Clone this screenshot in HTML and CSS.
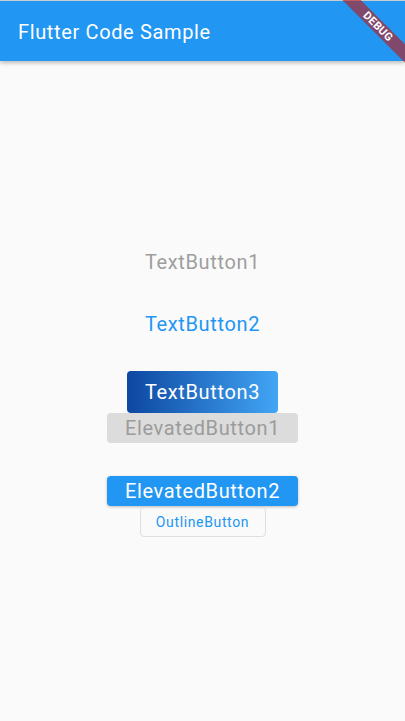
FILE: index.html
```html
<!DOCTYPE html>
<html>
<head>
<meta charset="utf-8">
<link rel="stylesheet" href="styles.css">
</head>
<body>
<div class="screen">
  <header class="appbar">
    <h1 class="title">Flutter Code Sample</h1>
  </header>
  <main class="content">
    <div class="text-btn disabled">TextButton1</div>
    <div class="text-btn primary">TextButton2</div>
    <div class="gradient-btn">TextButton3</div>
    <div class="elevated-btn disabled">ElevatedButton1</div>
    <div class="elevated-btn active">ElevatedButton2</div>
    <div class="outline-btn">OutlineButton</div>
  </main>
  <div class="debug-banner">DEBUG</div>
</div>
</body>
</html>
```
FILE: styles.css
```css
html, body {
  margin: 0;
  padding: 0;
}
body {
  background: #fafafa;
  font-family: Roboto, "Noto Sans", sans-serif;
}
.screen {
  position: relative;
  width: 405px;
  height: 721px;
  overflow: hidden;
  background: #fafafa;
  letter-spacing: 0.04em;
}
.appbar {
  height: 61px;
  box-sizing: border-box;
  border-top: 1px solid #c8ccd0;
  background: #2196f3;
  display: flex;
  align-items: center;
  padding-left: 18px;
  box-shadow: 0 2px 4px rgba(0, 0, 0, 0.25);
  position: relative;
  z-index: 1;
}
.title {
  margin: 0;
  font-size: 20px;
  font-weight: 400;
  color: #fff;
  padding-top: 2px;
}
.content {
  display: flex;
  flex-direction: column;
  align-items: center;
  padding-top: 183px;
}
.text-btn {
  height: 36px;
  line-height: 36px;
  font-size: 20px;
}
.text-btn.disabled {
  color: #9e9e9e;
}
.text-btn.primary {
  color: #2196f3;
  margin-top: 26px;
}
.gradient-btn {
  margin-top: 29px;
  width: 151px;
  height: 42px;
  line-height: 42px;
  text-align: center;
  border-radius: 4px;
  background: linear-gradient(to right, #0d47a1, #42a5f5);
  color: #fff;
  font-size: 20px;
}
.elevated-btn {
  width: 191px;
  height: 30px;
  line-height: 30px;
  text-align: center;
  border-radius: 4px;
  font-size: 20px;
}
.elevated-btn.disabled {
  background: #dcdcdc;
  color: #9b9b9b;
}
.elevated-btn.active {
  margin-top: 33px;
  background: #2196f3;
  color: #fff;
  box-shadow: 0 1px 3px rgba(0, 0, 0, 0.25);
}
.outline-btn {
  margin-top: 1px;
  box-sizing: border-box;
  width: 126px;
  height: 30px;
  line-height: 28px;
  text-align: center;
  border: 1px solid #dedede;
  border-radius: 4px;
  color: #2196f3;
  font-size: 14px;
}
.debug-banner {
  position: absolute;
  left: 308px;
  top: 20px;
  width: 140px;
  height: 13px;
  line-height: 13px;
  transform: rotate(45deg);
  background: rgba(183, 28, 28, 0.63);
  color: #fff;
  font-size: 11px;
  font-weight: 700;
  text-align: center;
  z-index: 2;
  letter-spacing: 0.3px;
}
```
